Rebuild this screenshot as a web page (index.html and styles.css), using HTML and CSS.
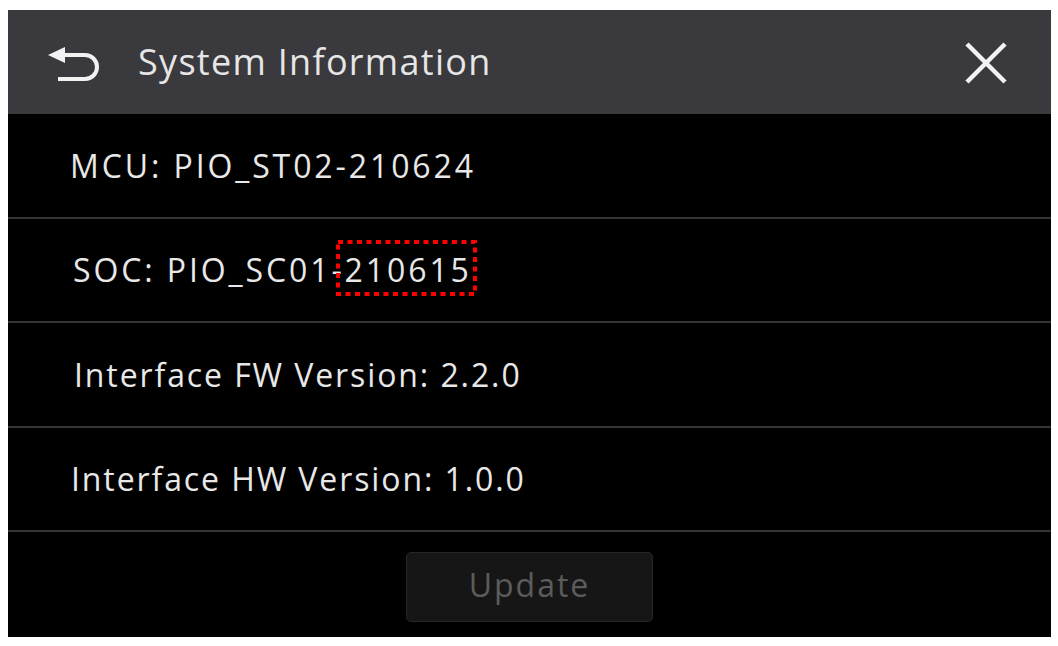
FILE: index.html
```html
<!DOCTYPE html>
<html lang="en">
<head>
  <meta charset="UTF-8">
  <title>System Information</title>
  <meta name="viewport" content="width=device-width, initial-scale=1" />
  <link rel="stylesheet" href="styles.css">
</head>
<body>
  <div class="screen">
    <div class="header">
      <svg class="back-icon" width="54" height="40" viewBox="0 0 54 40">
        <path d="M12 11 H39 A12 12 0 0 1 39 35 H12" fill="none" stroke="#f2f2f2" stroke-width="4" />
        <path d="M2 11 L19 3 L19 19 Z" fill="#f2f2f2" />
      </svg>
      <div class="title">System Information</div>
      <svg class="close-icon" width="42" height="42" viewBox="0 0 42 42">
        <path d="M2 2 L40 40 M40 2 L2 40" stroke="#f2f2f2" stroke-width="4.5" />
      </svg>
    </div>

    <div class="row code mcu">MCU: PIO_ST02-210624</div>
    <div class="row code soc">SOC: PIO_SC01-<span class="mark">210615<svg class="mark-box" width="141" height="56" viewBox="0 0 141 56"><rect x="2" y="2" width="137" height="52" fill="none" stroke="#ff0000" stroke-width="4" stroke-dasharray="5 4.5" /></svg></span></div>
    <div class="row fw">Interface FW Version: 2.2.0</div>
    <div class="row hw">Interface HW Version: 1.0.0</div>

    <div class="footer">
      <button class="update-btn" disabled>Update</button>
    </div>
  </div>
</body>
</html>
```

FILE: styles.css
```css
body { margin: 0; background: #fff; font-family: "Open Sans", "Noto Sans", sans-serif; }
.screen { margin: 10px 0 0 8px; width: 1043px; height: 627px; background: #000; color: #e8e8e8; }
.header { height: 104px; background: #3a393d; display: flex; align-items: center; padding: 0 44px 0 38px; box-sizing: border-box; }
.back-icon { display: block; margin-top: 4px; }
.title { flex: 1; margin-left: 38px; font-size: 36px; letter-spacing: 1.3px; color: #e6e6e6; padding-bottom: 2px; }
.close-icon { display: block; margin-top: 2px; }
.row { height: 104.5px; box-sizing: border-box; border-bottom: 2px solid #343434; display: flex; align-items: center; padding-left: 62px; font-size: 32px; letter-spacing: 1.9px; }
.code { letter-spacing: 2.9px; }
.soc { padding-left: 65px; }
.fw { padding-left: 66px; }
.hw { padding-left: 63px; }
.mark { position: relative; }
.mark-box { position: absolute; left: -9px; top: -8px; }
.footer { height: 105px; display: flex; align-items: center; justify-content: center; }
.update-btn { width: 247px; height: 70px; margin-top: 4px; background: #161616; border: 1px solid #272727; border-radius: 5px; color: #5c5c5c; font-family: inherit; font-size: 32px; letter-spacing: 2px; padding: 0 0 4px; }
```
